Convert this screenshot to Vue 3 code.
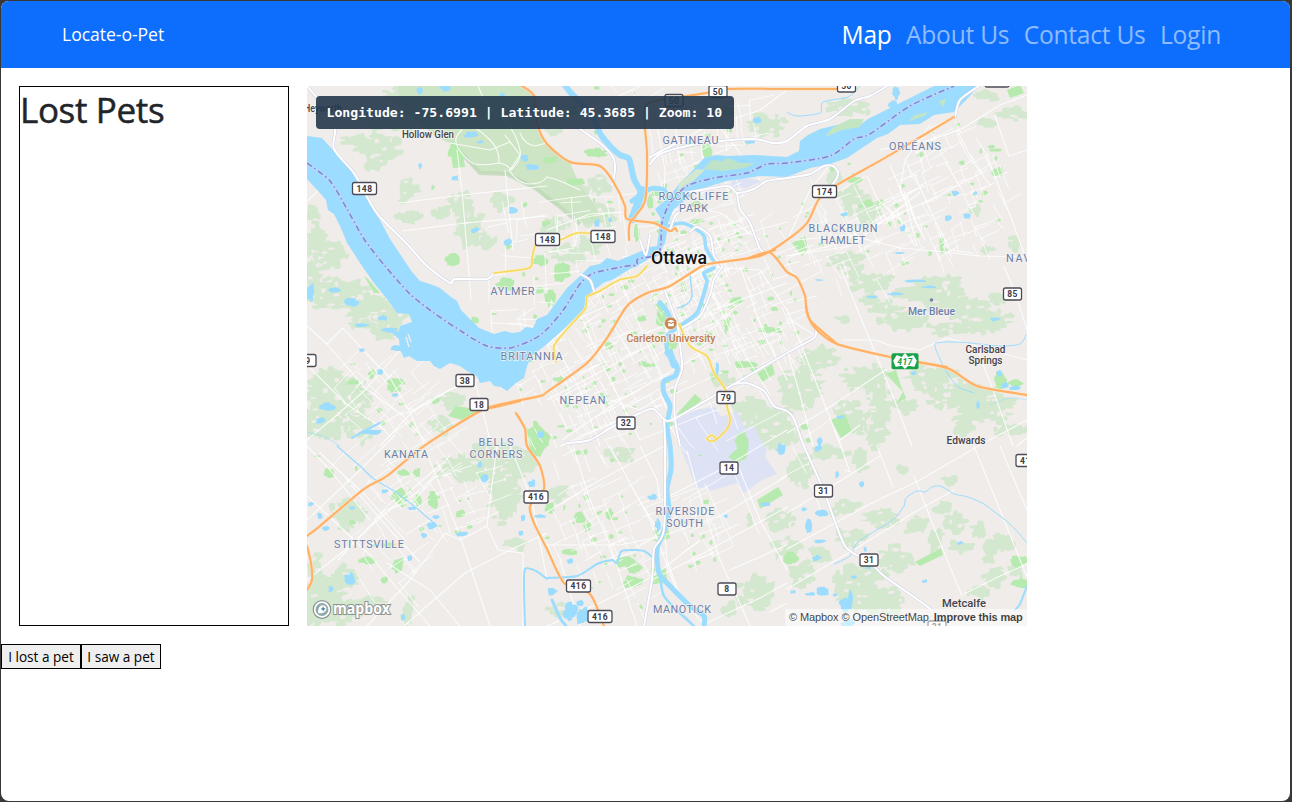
<script setup>
const links = [
  { label: 'Map', active: true },
  { label: 'About Us', active: false },
  { label: 'Contact Us', active: false },
  { label: 'Login', active: false },
]

// Deterministic random numbers keep the terrain the same on every load.
let seed = 41
function rnd() {
  seed = (seed * 16807) % 2147483647
  return seed / 2147483647
}

// Smooth curve through "x,y x,y ..." points.
function curve(str) {
  const p = str.split(' ').map((s) => s.split(',').map(Number))
  let d = `M${p[0][0]} ${p[0][1]}`
  for (let i = 0; i < p.length - 1; i++) {
    const a = p[i - 1] || p[i]
    const b = p[i]
    const c = p[i + 1]
    const e = p[i + 2] || c
    const t = 0.13
    d += `C${b[0] + (c[0] - a[0]) * t} ${b[1] + (c[1] - a[1]) * t} ${c[0] - (e[0] - b[0]) * t} ${c[1] - (e[1] - b[1]) * t} ${c[0]} ${c[1]}`
  }
  return d
}

// Irregular patch around a centre, with stepped edges.
function blob([x, y, rx, ry]) {
  const n = Math.max(8, Math.round((rx + ry) * 0.9))
  let d = ''
  for (let i = 0; i < n; i++) {
    const a = (i / n) * Math.PI * 2
    const k = 0.68 + rnd() * 0.5
    const px = (x + Math.cos(a) * rx * k).toFixed(1)
    const py = (y + Math.sin(a) * ry * k).toFixed(1)
    d += i === 0 ? `M${px} ${py}` : i % 3 === 0 ? `H${px}V${py}` : `L${px} ${py}`
  }
  return d + 'Z'
}

// A wood is one large patch, smaller outliers and a few clearings.
function wood([x, y, rx, ry]) {
  const d = [blob([x, y, rx, ry])]
  const n = Math.round((rx + ry) / 8)
  for (let i = 0; i < n; i++) {
    const a = rnd() * Math.PI * 2
    d.push(blob([x + Math.cos(a) * rx * 1.05, y + Math.sin(a) * ry * 1.05, 2 + rnd() * 4, 1.5 + rnd() * 3]))
  }
  return d
}
function clearing([x, y, rx, ry]) {
  const d = []
  const n = Math.round((rx + ry) / 11)
  for (let i = 0; i < n; i++) {
    const a = rnd() * Math.PI * 2
    const k = 0.25 + rnd() * 0.6
    d.push(blob([x + Math.cos(a) * rx * k, y + Math.sin(a) * ry * k, 1.5 + rnd() * 3, 1 + rnd() * 2]))
  }
  return d
}

const woodSpots = [
  [377,148,24,12],[357,140,12,7],[375,163,12,9],[407,190,9,12],[460,205,13,12],[410,217,11,7],[470,230,14,20],[312,213,6,10],[317,243,12,18],[334,253,12,15],
  [500,200,10,9],[443,213,8,8],[487,243,8,9],[395,125,24,6],[415,97,34,12],[370,118,10,5],
  [340,290,26,12],[372,308,28,13],[388,332,16,8],[313,280,9,20],[330,300,20,9],[390,318,18,10],[365,325,12,4],
  [338,395,30,22],[322,422,24,18],[360,425,12,16],[452,402,12,8],[442,425,13,8],[330,377,16,10],[350,403,18,12],
  [468,468,32,13],[505,488,17,34],[520,462,18,14],[492,450,22,8],[350,515,20,14],[318,602,24,24],[345,578,15,12],[315,572,8,18],[373,602,16,6],[408,610,5,17],[515,543,14,5],[335,612,26,12],
  [773,430,24,22],[743,415,12,11],[720,380,11,8],[755,405,13,7],[557,493,11,8],[622,455,14,8],[780,520,13,12],[788,548,14,11],[757,592,18,17],[730,610,7,8],[750,518,3,6],[565,610,16,6],
  [873,283,20,10],[928,292,32,10],[903,320,22,9],[960,308,30,12],[990,322,22,11],[870,300,10,7],[950,328,22,7],[1000,298,12,6],[855,272,8,7],[840,318,6,2],[942,282,20,6],[886,308,16,6],
  [820,360,22,11],[800,388,24,18],[865,378,24,13],[855,420,15,14],[880,408,12,24],[930,375,28,9],[963,395,36,14],[982,413,26,11],[845,408,12,10],[965,425,12,10],[907,406,12,7],[1010,430,14,7],[875,435,10,12],[800,404,15,8],[996,402,20,8],[932,388,16,6],
  [830,453,18,7],[860,458,9,10],[800,470,12,17],[845,507,14,8],[880,517,18,9],[852,537,16,8],[855,590,22,25],[895,560,17,13],[890,602,14,14],[917,525,12,8],[945,507,8,8],[955,523,10,11],[935,540,7,12],[962,547,13,5],[980,530,6,10],[990,550,8,10],[1005,543,10,9],[995,577,11,9],[980,592,11,6],[1015,570,8,8],[900,468,5,5],[950,482,8,5],[803,575,12,13],[870,575,14,8],[820,555,10,8],[870,600,18,14],
  [855,200,16,12],[868,214,11,16],[845,260,16,8],[850,106,20,9],[985,122,8,5],[1010,114,15,6],[977,210,4,8],[986,250,6,5],[1015,245,5,8],[765,125,20,12],[720,115,14,8],[567,254,16,10],[590,245,12,8],[575,196,18,12],[600,215,16,11],[600,186,12,9],[555,225,13,8],[552,118,14,14],[835,178,8,10],[985,95,12,5],
]
const woods = woodSpots.flatMap(wood)
const clearings = woodSpots.filter((w) => w[2] + w[3] > 20).flatMap(clearing)

const parkPatches = [
  [455,150,7,8],[452,260,7,8],[433,187,2,3],[707,151,5,9],[595,153,13,5],[575,182,10,4],[550,160,8,4],[572,112,8,5],[690,145,6,3],[505,284,9,7],[550,298,6,9],[562,272,9,9],[540,260,8,7],[475,320,4,4],[395,382,10,5],[372,374,4,5],[353,382,7,3],[394,388,7,6],[435,400,5,4],[329,473,6,5],[367,560,8,5],[398,565,6,8],[385,580,4,4],[433,500,5,10],[418,500,4,6],[404,472,6,4],[417,472,4,5],[625,562,12,6],[634,568,9,6],[633,582,10,7],[661,577,7,8],[580,518,6,6],[570,552,8,4],[587,526,4,5],[550,508,6,5],[610,514,4,6],[736,301,7,4],[727,325,3,9],[609,345,5,4],[649,365,10,2],[770,330,11,3],[744,365,12,4],[672,343,6,8],[742,441,7,8],[1000,380,6,10],[1015,383,8,4],[790,558,9,7],[1018,562,9,7],[1020,583,8,5],[855,180,8,3],[997,172,6,5],[880,202,4,3],[868,203,6,4],[942,245,3,9],[996,150,7,2],[805,427,5,3],[460,513,5,4],[388,545,7,3],[642,318,6,3],[695,205,7,4],[697,222,8,3],[650,203,4,8],[637,233,3,10],[540,290,5,4],[683,285,3,5],
].map(blob)
const parks = [
  '527,430 538,424 551,437 540,457 530,454','456,406 482,410 466,421 448,416','831,420 845,414 852,432 841,438','886,374 896,370 901,386 906,398 896,404 903,392','393,492 402,487 408,497 403,508 392,499','728,457 740,446 749,446 746,459 737,462','757,500 778,487 783,495 760,509','915,562 941,548 943,555 920,566','792,243 805,236 808,250 802,256','1007,90 1020,85 1024,93 1010,98','756,374 772,364 775,374 762,382','677,414 695,394 702,400 680,417','658,300 667,303 665,329 656,324','364,276 368,279 380,293 374,293','450,147 462,149 465,167 453,168','531,442 548,432 549,445 535,456','655,536 668,528 670,538 660,542',
]

const ponds = [
  [420,166,2,3],[455,178,4,3],[513,210,5,4],[508,242,4,4],[475,230,4,3],[470,135,8,3],[525,158,4,4],[420,90,4,4],[445,88,6,4],[502,95,3,3],[533,167,8,3],[480,142,4,2],
  [335,290,6,3],[352,302,7,5],[310,292,4,10],[362,325,7,2],[382,318,6,3],[390,330,9,3],[362,350,3,2],[398,348,8,3],[327,407,8,4],[321,420,6,3],[395,395,4,2],[370,432,11,3],[380,372,3,4],
  [485,478,4,5],[480,464,3,3],[532,483,4,4],[462,534,6,3],[432,525,5,4],[424,535,3,3],[385,491,4,2],[412,508,5,2],[350,579,6,7],[331,589,3,4],[410,558,3,3],[320,516,3,4],[311,504,3,2],[326,528,4,3],[436,517,4,2],[523,518,3,4],[521,533,3,3],[403,617,2,4],[541,434,4,4],[539,516,7,2],[352,508,3,2],
  [652,497,5,3],[658,524,3,7],[570,561,4,3],[570,612,8,9],[583,616,7,9],[580,603,4,4],[552,591,5,4],[781,449,5,6],[766,504,5,2],[726,516,2,2],[717,370,2,8],
  [955,193,4,3],[948,218,4,3],[967,216,4,3],[903,228,3,4],[844,214,4,2],[900,253,6,1],[975,193,2,2],[937,97,5,4],[896,93,4,7],[893,104,5,5],[757,120,5,4],[750,142,6,1.5],[597,223,3,5],[610,220,2,3],
  [914,281,12,1.5],[930,287,8,1.5],[895,294,8,1.5],[872,297,6,1.5],[995,319,6,2],[819,280,5,1],[1005,385,4,3],[1015,388,6,3],[999,373,3,4],[914,373,3,2],[978,405,2,5],[840,417,4,2],[820,441,3,5],
  [818,448,4,4],[837,475,2,4],[862,484,3,4],[822,513,8,4],[804,509,3,2],[809,525,4,9],[820,541,6,2],[816,558,5,3],[822,592,7,5],[845,605,6,8],[850,600,3,9],[835,595,3,2],[960,543,3,2],[925,581,3,2],[854,577,3,2],[865,549,2,3],[868,568,3,1],[810,594,5,2],[793,592,3,2],[848,623,7,4],
].map(blob)

// Neighbourhood streets: [cx, cy, rx, ry, angle, spacing, density]
const districts = [
  [850,205,60,45,-25,14,.28],[945,190,60,70,-25,12,.5],[890,235,60,45,-25,15,.45],[695,215,48,70,-22,10,.5],[735,285,65,70,-24,12,.5],[620,310,60,50,-28,11,.5],[690,290,40,50,-28,8,.5],
  [560,340,55,45,-28,13,.4],[610,375,65,60,-26,12,.45],[570,415,65,50,-24,12,.4],[740,345,60,40,-26,13,.4],[590,100,60,30,-30,14,.35],[700,120,60,38,-8,13,.45],[590,230,50,45,-5,16,.4],
  [520,290,45,45,-3,16,.45],[540,220,55,40,-5,19,.4],[375,390,45,35,-42,13,.5],[410,450,42,55,-35,13,.45],[455,500,38,40,-22,14,.3],[385,535,42,60,-38,16,.4],[345,455,40,32,-42,18,.25],
  [600,520,60,45,-26,14,.55],[620,570,48,38,-26,13,.4],[700,530,28,40,-24,14,.5],[660,470,100,80,-26,35,.3],[800,465,20,45,-27,22,.3],[820,240,46,45,-26,15,.35],[710,410,40,30,-28,20,.3],
]
const streets = []
const specks = []
for (const [cx, cy, rx, ry, ang, gap, dens] of districts) {
  const r = (ang * Math.PI) / 180
  const co = Math.cos(r)
  const si = Math.sin(r)
  const n = Math.ceil(Math.max(rx, ry) / gap)
  const at = (u, v) => [cx + u * co - v * si, cy + u * si + v * co]
  for (let i = -n; i <= n; i++) {
    for (let j = -n; j <= n; j++) {
      const u = i * gap + (rnd() - 0.5) * gap * 0.5
      const v = j * gap + (rnd() - 0.5) * gap * 0.5
      const [x, y] = at(u, v)
      if (((x - cx) / rx) ** 2 + ((y - cy) / ry) ** 2 > 1) continue
      const bend = (rnd() - 0.5) * gap * 0.5
      if (rnd() < dens) {
        const b = at(u + gap, v + bend * 0.6)
        const c = at(u + gap * (1 + rnd()), v + bend)
        streets.push(`M${x} ${y}L${b[0]} ${b[1]}L${c[0]} ${c[1]}`)
      }
      if (rnd() < dens) {
        const b = at(u + bend * 0.5, v + gap)
        const c = at(u + bend, v + gap * (1 + rnd()))
        streets.push(`M${x} ${y}L${b[0]} ${b[1]}L${c[0]} ${c[1]}`)
      }
      if (rnd() < 0.24) specks.push(blob([x + 3, y + 3, 1.2 + rnd() * 3, 1 + rnd() * 2]))
    }
  }
}

const lanes = [
  '399,203 462,195 547,186','403,231 465,223 547,216','457,150 462,190 467,250 471,300','505,170 508,200 513,250','307,201 320,189','840,266 860,316 893,396 912,446','787,309 815,380 841,446','787,256 830,246 860,231 930,200 987,170','787,433 822,412 887,369','977,349 993,390 1013,446','974,446 1004,520 1027,577','914,476 935,530 962,596','787,513 840,481 880,456','787,549 870,504 920,480 980,445 1027,420','787,589 860,546 920,509 954,490','964,594 1000,576 1027,564','877,446 893,487','995,116 1009,156 1027,150','987,156 1010,215 1025,256','914,173 930,210 950,250 973,253','825,210 826,222 837,250','787,256 850,246 890,216 920,192',
  '842,340 875,340 892,346 920,350 947,338 1027,360','787,318 815,335','787,303 817,296','1004,266 1015,292 1027,330','1017,446 1027,438','797,240 850,235 900,248 945,252 980,256 1027,257',
  '307,440 337,415 365,390 400,350','307,326 327,344 365,388 402,415 430,446','327,344 343,328 365,352 390,378 410,412 425,446','307,365 345,403 385,430','307,496 333,520 370,555 390,580 430,626','307,580 345,550 400,500 440,465','380,446 412,412 450,390 490,375 522,386','427,453 450,510 463,545 490,626','472,370 480,400 490,440','497,446 490,500 487,526 498,550 523,553 523,626','510,446 532,500 547,580','367,626 410,580 445,533','387,563 430,590 460,626','404,626 465,573 510,550 547,533','307,520 360,470 395,435','320,453 365,495 405,540','445,533 460,540 487,526','307,446 330,470 370,520','345,478 390,530 420,562','338,560 385,510 415,500 450,455','400,415 412,411 430,400 455,387',
  '573,446 590,500 610,545 637,626','547,512 600,480 664,446','547,545 620,545 662,536 720,516 787,476','687,451 697,487 720,560 750,626','662,500 720,470 787,430','739,468 760,520 787,570','652,580 700,555 787,507','562,440 620,400 700,355','640,446 657,480 660,500','547,626 600,603 652,577 700,540','665,536 667,560 680,596 705,626','770,612 787,603','610,446 650,520 680,600','730,570 787,545','700,626 760,598 787,583','560,560 580,626','547,330 580,390 600,446','570,290 600,360 640,440','620,280 650,350 664,385','547,400 600,372 650,345 665,335','700,266 730,330 770,395','740,266 762,330 787,380','690,320 740,300 787,283','547,115 600,105 640,86','647,160 700,130 760,110 787,90','658,130 665,170 664,200','547,230 590,214 625,212','690,250 750,232 787,222','690,266 760,270 787,310','560,446 620,420 662,405','680,205 720,213 760,240','787,241 810,190 830,165','880,150 930,140 960,130 1000,105 1027,95','700,105 730,140 760,180','610,400 640,410 664,395','650,300 700,270 725,240','505,135 520,155 510,170','450,143 490,150 510,142','547,345 575,320 620,300',
  '930,125 905,160 900,190 925,240','957,130 975,165 990,185','867,176 878,200 900,220 915,246','890,165 905,200 917,246','840,440 860,425','787,350 800,395 813,446','1000,446 1012,475 1027,510','845,470 850,472 835,430',
]

const roads = [
  '307,86 325,108 335,129 334,149 354,173 366,195 379,216 407,244 427,266 450,283 455,279 487,279 494,273',
  '550,108 580,129 600,143 613,157 615,170 612,185','650,164 660,154 687,146 720,141 754,139 774,143 787,141 807,126 830,119 854,101 870,96 887,86','650,157 675,144 687,142',
  '685,193 727,186 737,193 754,189 767,181 787,178 810,174 824,166 833,166 838,172 836,180 831,186','737,193 740,209 750,223 760,249 768,254','979,86 960,100 955,117',
  '690,232 697,227 710,236 714,256 722,266 714,279 710,295 700,316 680,329','665,291 677,323 680,345 682,369 675,389 675,419 680,446','567,443 590,440 614,426 650,409 658,413 664,419 674,419 734,384 787,353 814,338 816,330','734,384 747,383 764,391 774,406 787,411 794,419 804,446 824,491 845,546 869,561 884,576 930,609 935,626','664,421 665,446 664,529 654,549 652,579 644,626','580,274 590,280 594,291','670,230 676,215 690,207','640,240 646,255 650,235',
].map(curve)

const highways = [
  '307,536 320,526 364,489 387,476 424,446 480,411 507,403 540,396 547,392 587,363 607,338 627,306 647,293 670,286 702,266 714,263 760,256 787,240 807,223 819,199 835,186 890,155 954,117',
  '749,258 768,252 776,258 787,272 797,278 805,296 807,313 815,328 837,344 890,357 947,368 977,386 1027,395',
  '522,86 534,96 537,123 547,144 570,162 600,166 614,183 625,206 627,219 654,223 670,231 675,228 677,231','629,240 630,223 645,201 647,153 644,109 657,101 707,93 727,89 787,89 837,89','516,413 525,429 527,446 540,466 544,489 530,506 534,523 547,549 564,583 590,594 604,626','307,546 311,563 312,580 307,590','480,410 500,406 520,401','806,306 810,320 823,332 836,343','918,362 947,367','752,257 775,250',
].map(curve)
const yellows = [
  '494,273 529,268 532,258 537,243 557,241 577,233 597,234','647,266 637,276 619,280 600,291 587,297 585,309 567,329 554,346 556,362','679,324 690,346 707,356 714,373 725,389 727,406 730,419 727,429 714,441 707,439 712,435 716,439',
].map(curve)

const river = '307,136 322,138 332,149 347,164 360,186 374,209 390,239 408,266 412,272 420,281 430,284 440,288 451,297 457,301 461,310 467,316 479,328 494,334 505,331 512,333 520,332 526,327 533,328 537,319 547,315 552,308 567,288 580,276 590,266 600,264 607,258 618,261 627,257 637,253 650,247 657,246 661,219 655,209 668,198 680,183 694,169 704,158 716,155 727,156 754,155 787,157 799,151 800,141 808,135 820,129 850,122 860,125 868,119 882,112 894,106 920,93 934,86 979,86 967,99 954,112 934,115 920,124 900,125 888,134 877,138 847,158 830,164 810,168 787,177 760,176 727,181 700,189 687,199 674,209 669,219 665,243 660,250 644,262 630,269 614,279 603,283 587,296 584,309 564,329 547,344 532,356 527,366 524,378 516,383 507,391 501,387 494,386 490,381 480,383 477,376 467,371 460,366 450,363 440,369 434,366 430,361 417,361 409,356 404,358 400,349 399,339 391,332 399,331 400,326 412,322 409,314 397,313 387,299 374,283 362,266 353,252 347,243 341,228 334,214 328,210 326,200 320,193 307,179'
const creeks = [
  ['564,84 570,92 577,99 590,113 597,126 601,135 610,146 620,155 629,159 634,179 642,193',6],['642,190 637,206 632,219',8],['632,201 650,189 664,190 668,200',5],
  ['714,268 704,273 707,281 704,293 697,313 680,326 667,336 667,353',4],['667,353 677,366 675,376 664,381 664,393 670,406 667,426 670,446 671,469 667,489 669,513 662,536 657,549 659,573 670,586 690,606 704,616 704,626',5],['660,303 666,310 670,318',5],['670,353 674,365',7],['660,576 664,596 680,613 694,626',2.5],
  ['668,226 682,223 694,228 704,236 706,248 714,262',3.5],['690,275 692,296 687,304 678,308',1.5],['547,578 577,576 597,564 612,560 617,563 622,551 644,551 655,560',2],['834,564 850,556 857,543 875,531 894,519 904,506 906,498 917,491 925,492 932,487 940,486 948,490 954,494 968,497 984,504 992,510 1004,519 1015,529 1027,543',1],['974,393 957,386 945,369 940,359 935,344 950,342 970,343 1000,346 1020,344 1026,335',1],['337,446 360,466 374,479 397,493 420,511 437,526',1.2],['525,626 524,590 525,569 536,571 547,579',2],['352,438 370,428 380,423',2],['552,600 560,618 566,626',3],['1027,586 1020,604 1015,610',2],['787,112 797,116 820,113 823,102 848,97 860,86',1],['307,432 325,437 340,446',.7],['1027,400 1010,398 990,405',.5],
].map(([p, w]) => ({ d: curve(p), w }))
const boundary = curve('307,163 330,181 347,209 364,239 385,266 410,294 434,313 464,333 487,346 510,348 534,339 547,329 564,309 580,284 594,273 627,266 637,265 638,259 659,253 662,223 670,203 687,186 714,178 747,173 767,164 787,163 830,156 854,139 870,134 910,106 954,86')

const shields = [
  [364.5,188.5,24,'148'],[547.5,239.5,24,'148'],[603,236.5,24,'148'],[674,100.5,18,'50'],[718,91.5,18,'50'],[846.5,86,18,'50'],[824.5,191.5,24,'174'],[1012.5,294,18,'85'],[465,380.5,18,'38'],[479,404.5,18,'18'],[626,423,18,'32'],[726,397.5,18,'79'],[729,468,18,'14'],[823.5,491,18,'31'],[869,560,18,'31'],[727,589,18,'8'],[536,497,24,'416'],[578.5,586,24,'416'],[600,616.5,24,'416'],[308,360.5,16,'9'],[1028,460.5,24,'417'],[937,627,18,'31'],[997,81,24,''],
]

// [x, baseline y, width, text]
const suburbs = [
  [690.5,143.5,56,'GATINEAU'],[693.5,199.5,70,'ROCKCLIFFE'],[693.5,211.5,29,'PARK'],[915,149.5,52,'ORLÉANS'],[843,231.5,69,'BLACKBURN'],[843,243.5,45,'HAMLET'],[1027,261.5,42,'NAVAN'],[512.5,295,44,'AYLMER'],[531.5,359.5,62,'BRITANNIA'],[582.5,404,46,'NEPEAN'],[496,446,35,'BELLS'],[496,458,53,'CORNERS'],[406,458,44,'KANATA'],[369,547.5,70,'STITTSVILLE'],[685,515,59,'RIVERSIDE'],[684.5,527,37,'SOUTH'],[682,612.5,58,'MANOTICK'],
]
const towns = [
  [428,137.5,52,10,'Hollow Glen'],[323,112,38,10,'Heyworth'],[985.5,353,40,10,'Carlsbad'],[985.5,364,34,10,'Springs'],[966,444,39,10,'Edwards'],[964,606.5,44,11,'Metcalfe'],
]
</script>

<template>
  <div class="window">
    <div class="page">
      <nav class="navbar">
        <a class="brand">Locate-o-Pet</a>
        <div class="links">
          <a v-for="l in links" :key="l.label" :class="['link', { active: l.active }]">{{ l.label }}</a>
        </div>
      </nav>
      <main class="content">
        <aside class="lost"><h1>Lost Pets</h1></aside>
        <section class="map">
          <svg class="canvas" viewBox="307 86 720 540" width="720" height="540">
            <rect x="307" y="86" width="720" height="540" fill="#efecea" />
            <g fill="#d4e7cf"><path v-for="(d, i) in woods" :key="i" :d="d" /></g>
            <g fill="#efecea"><path v-for="(d, i) in clearings" :key="i" :d="d" /></g>
            <path d="M398 86H524L534 96L537 123L547 144L570 163L580 185L594 204L602 222L585 224L560 207L547 200L535 188L507 174L480 173L464 156L452 144L436 137L420 123L402 112Z" fill="#cde5c5" />
            <path d="M452 144L464 156L480 173L507 174L535 188L560 207L580 224" fill="none" stroke="#bbd7b2" stroke-width="4" opacity=".7" />
            <path d="M675 421L695 410L715 407L721 417L737 411L745 428L754 426L760 438L767 449L765 457L777 474L762 480L744 493L737 483L710 491L707 486L697 489L688 466L680 446Z" fill="#dde2f5" />
            <path d="M730 180L745 178L762 181L746 188L733 187Z" fill="#dde2f5" />
            <g fill="#b7eaae">
              <path v-for="(d, i) in parkPatches" :key="i" :d="d" />
              <polygon v-for="(p, i) in parks" :key="'p' + i" :points="p" />
              <path v-for="(d, i) in specks" :key="'s' + i" :d="d" />
            </g>
            <g class="stroke" stroke="#fff">
              <path v-for="(d, i) in streets" :key="i" :d="d" stroke-width=".9" opacity=".85" />
              <polyline v-for="(p, i) in lanes" :key="'l' + i" :points="p" stroke-width="1.1" opacity=".85" />
            </g>
            <g class="stroke" stroke="#fff" stroke-width="1.1" opacity=".85">
              <path d="M462 130Q452 138 458 148T474 164Q486 166 499 163Q507 164 511 170Q522 160 520 150T512 130T498 115T482 95L478 86M520 133Q525 145 535 146L547 143M499 163Q500 150 490 140T470 125M509 170Q518 184 530 184T547 177Q556 179 565 183L580 190" />
            </g>
            <g fill="#9bdcff">
              <path v-for="(d, i) in ponds" :key="i" :d="d" />
              <polygon :points="river" />
            </g>
            <g class="stroke" stroke="#9bdcff">
              <path v-for="(c, i) in creeks" :key="i" :d="c.d" :stroke-width="c.w" />
            </g>
            <path d="M703 169L712 160L722 161L728 158L740 163L755 163L745 168L722 171Z" fill="#bfe3c8" />
            <path d="M680 182L697 169L705 170L690 184L676 195Z" fill="#d4e7cf" />
            <path d="M825 137L842 130L860 127L864 119L850 119L832 128M909 121L924 116L928 112L915 115ZM939 101L946 99L943 107Z" fill="#c3e6c2" />
            <path d="M408 334L411 342M406 337L409 347" stroke="#efecea" stroke-width="1.4" />
            <path :d="boundary" fill="none" stroke="#b8d5fa" stroke-width="4" opacity=".7" />
            <path :d="boundary" fill="none" stroke="#8583d3" stroke-width="1.5" stroke-dasharray="6 3 1.5 3" />
            <g class="stroke" stroke="#cfd2e4" stroke-width="3"><path v-for="(d, i) in roads" :key="i" :d="d" /></g>
            <g class="stroke" stroke="#fff" stroke-width="2"><path v-for="(d, i) in roads" :key="i" :d="d" /></g>
            <g class="stroke" stroke="#fff2c4" stroke-width="2.8"><path v-for="(d, i) in yellows" :key="i" :d="d" /></g>
            <g class="stroke" stroke="#f8d95f" stroke-width="1.7"><path v-for="(d, i) in yellows" :key="i" :d="d" /></g>
            <g class="stroke" stroke="#ffe0bd" stroke-width="3"><path v-for="(d, i) in highways" :key="i" :d="d" /></g>
            <g class="stroke" stroke="#ffb066" stroke-width="2"><path v-for="(d, i) in highways" :key="i" :d="d" /></g>

            <g v-for="(s, i) in shields" :key="'h' + i">
              <rect :x="s[0] - s[2] / 2" :y="s[1] - 6" :width="s[2]" height="12" rx="2" fill="#fff" stroke="#4c4b55" stroke-width="1.3" />
              <text class="shield" :x="s[0]" :y="s[1] + 3.2">{{ s[3] }}</text>
            </g>
            <rect x="891.5" y="353.3" width="27" height="16" rx="2" fill="#17a24a" />
            <path d="M894 361L897 356L902 358L905 354L908 358L913 356L916 361L914 366L908 365L905 368L902 365L896 366Z" fill="#fff" stroke="#fff" stroke-width="1.5" stroke-linejoin="round" />
            <text class="shield trans" x="905" y="364.5">417</text>

            <text v-for="(t, i) in suburbs" :key="'u' + i" class="suburb" :x="t[0]" :y="t[1]" :textLength="t[2]">{{ t[3] }}</text>
            <text v-for="(t, i) in towns" :key="'t' + i" class="town" :x="t[0]" :y="t[1]" :textLength="t[2]" lengthAdjust="spacingAndGlyphs" :font-size="t[3]">{{ t[4] }}</text>
            <text class="town city" x="679" y="264" textLength="56" lengthAdjust="spacingAndGlyphs" font-size="18">Ottawa</text>
            <circle cx="931.5" cy="300" r="1.8" fill="#7385aa" />
            <text class="town bog" x="931.5" y="314.5" textLength="47" lengthAdjust="spacingAndGlyphs" font-size="10.5">Mer Bleue</text>
            <circle cx="670.7" cy="323.3" r="6.3" fill="#c58650" stroke="#f4e9df" stroke-width=".8" />
            <path d="M667 321.3L671 319.8L674.6 321.2L671 322.7ZM668.2 322.8L671 324L673.8 322.8V326.2H668.2Z" fill="#fff" />
            <text class="town uni" x="671" y="342" textLength="89" lengthAdjust="spacingAndGlyphs" font-size="10.5">Carleton University</text>

            <g class="logo">
              <circle cx="322" cy="609.5" r="8.8" fill="#fff" stroke="#8e9492" stroke-width="1.2" />
              <circle cx="322" cy="609.5" r="6.4" fill="#8fa9ab" />
              <path d="M318.3 613.2C317.5 608 320 604.8 323.4 605.2C326.5 605.7 327.5 609.3 325.2 611.5C323.4 613.2 321 613.6 318.3 613.2Z" fill="#fff" />
              <path d="M323.2 606.3L324 608.1L325.8 608.9L324 609.7L323.2 611.5L322.4 609.7L320.6 608.9L322.4 608.1Z" fill="#4f86a8" />
              <text x="333" y="614" textLength="57" lengthAdjust="spacingAndGlyphs">mapbox</text>
            </g>
          </svg>
          <div class="coords">Longitude: -75.6991 | Latitude: 45.3685 | Zoom: 10</div>
          <div class="attrib"><a>© Mapbox</a><a>© OpenStreetMap</a><a class="improve">Improve this map</a></div>
        </section>
      </main>
      <div class="actions"><button>I lost a pet</button><button>I saw a pet</button></div>
    </div>
  </div>
</template>

<style>
body { background: #383838; }
</style>

<style scoped>
.window { box-sizing: border-box; height: 802px; padding: 1px 2px 1px 1px; background: #383838; font-family: "Open Sans", "Noto Sans", sans-serif; }
.page { height: 800px; background: #fff; border-radius: 8px; overflow: hidden; }
.navbar { box-sizing: border-box; height: 67px; padding: 0 69px 0 61px; background: #0d6efd; display: flex; align-items: center; justify-content: space-between; }
.brand { color: #fff; font-size: 17.6px; letter-spacing: -0.05px; padding-bottom: 1px; }
.links { display: flex; gap: 14.4px; font-size: 24.6px; letter-spacing: -0.25px; white-space: nowrap; }
.link { color: #8fbcfe; }
.link.active { color: #fff; }
.content { display: flex; gap: 18px; padding: 18px; }
.lost { box-sizing: border-box; width: 270px; height: 540px; border: 1px solid #000; }
h1 { margin: 0; padding: 1px 0 0; font-size: 35px; line-height: 44px; font-weight: 500; letter-spacing: -.35px; color: #212529; -webkit-text-stroke: .5px #212529; white-space: nowrap; }
.map { position: relative; width: 720px; height: 540px; overflow: hidden; }
.canvas { display: block; }
.stroke { fill: none; stroke-linecap: round; stroke-linejoin: round; }
.shield { font: 700 8.5px "Roboto", sans-serif; text-anchor: middle; fill: #3c3b45; letter-spacing: .4px; }
.trans { fill: #17a24a; font-style: italic; }
.suburb { font: 400 10.8px "Roboto", sans-serif; text-anchor: middle; fill: #6c7ea6; paint-order: stroke; stroke: #f5f3f2; stroke-width: 1.4px; }
.town { font-family: "Roboto", sans-serif; font-weight: 500; text-anchor: middle; fill: #45434b; paint-order: stroke; stroke: #f5f3f2; stroke-width: 1.6px; }
.city { fill: #111; }
.bog { fill: #6b7fa6; }
.uni { fill: #bd7d49; }
.logo text { font: 700 16px "Open Sans", sans-serif; fill: #fff; paint-order: stroke; stroke: #8e9492; stroke-width: 2.2px; }
.coords { position: absolute; left: 9px; top: 10px; box-sizing: border-box; width: 418px; height: 33px; padding-left: 10.5px; border-radius: 4px; background: rgba(35, 55, 75, .9); color: #fff; font: 700 13.15px/33px "DejaVu Sans Mono", monospace; white-space: pre; }
.attrib { position: absolute; right: 0; bottom: 0; box-sizing: border-box; width: 242px; height: 17px; padding-left: 4px; display: flex; gap: 3px; background: rgba(255, 255, 255, .5); color: rgba(0, 0, 0, .75); font: 11px/17px "Liberation Sans", sans-serif; letter-spacing: -.1px; white-space: nowrap; }
.improve { margin-left: 2px; font-weight: 700; letter-spacing: -.14px; }
.actions { display: flex; }
button { box-sizing: border-box; width: 80px; height: 25px; padding: 0; border: 1px solid #000; border-radius: 0; background: #efefef; color: #000; font: 13.6px "Open Sans", "Noto Sans", sans-serif; white-space: nowrap; }
</style>
